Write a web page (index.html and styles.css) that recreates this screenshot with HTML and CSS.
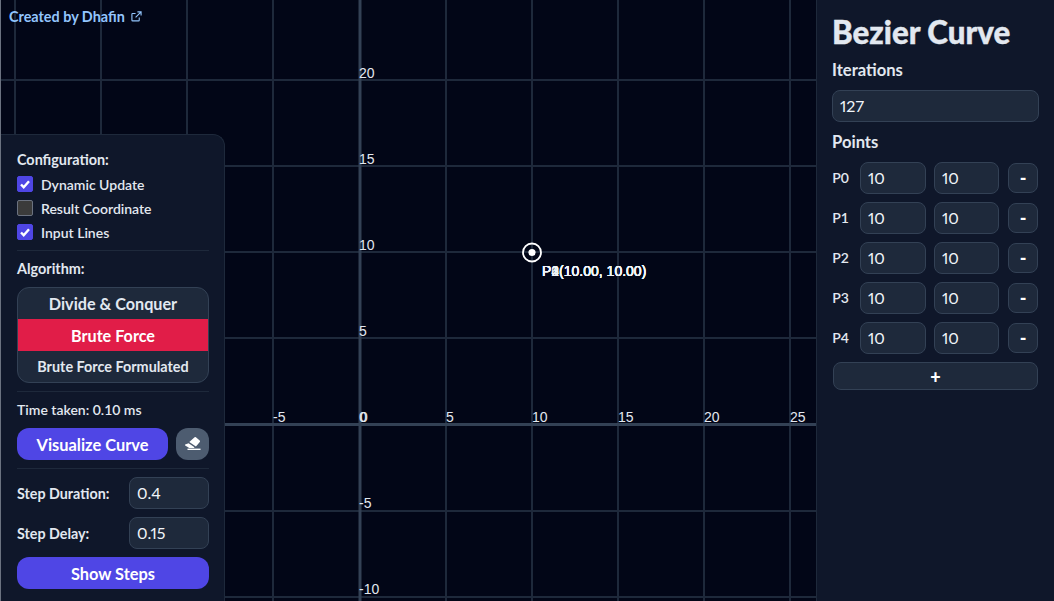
FILE: index.html
```html
<!DOCTYPE html>
<html lang="en">
<head>
    <meta charset="UTF-8">
    <title>Bezier Curve</title>
    <link rel="stylesheet" href="styles.css">
</head>
<body>
    <div class="app">
        <div class="canvas">
            <svg class="graph" width="816" height="601" viewBox="0 0 816 601">
                <g class="grid">
                    <line x1="15" y1="0" x2="15" y2="601"/>
                    <line x1="101" y1="0" x2="101" y2="601"/>
                    <line x1="187" y1="0" x2="187" y2="601"/>
                    <line x1="273" y1="0" x2="273" y2="601"/>
                    <line x1="446" y1="0" x2="446" y2="601"/>
                    <line x1="532" y1="0" x2="532" y2="601"/>
                    <line x1="618" y1="0" x2="618" y2="601"/>
                    <line x1="704" y1="0" x2="704" y2="601"/>
                    <line x1="790" y1="0" x2="790" y2="601"/>
                    <line x1="0" y1="80" x2="816" y2="80"/>
                    <line x1="0" y1="166" x2="816" y2="166"/>
                    <line x1="0" y1="252" x2="816" y2="252"/>
                    <line x1="0" y1="338" x2="816" y2="338"/>
                    <line x1="0" y1="511" x2="816" y2="511"/>
                    <line x1="0" y1="597" x2="816" y2="597"/>
                </g>
                <g class="axes">
                    <line x1="360" y1="0" x2="360" y2="601"/>
                    <line x1="0" y1="424.5" x2="816" y2="424.5"/>
                </g>
                <g class="ticks">
                    <text x="359" y="78">20</text>
                    <text x="359" y="164">15</text>
                    <text x="359" y="250">10</text>
                    <text x="359" y="336">5</text>
                    <text x="359" y="422">0</text>
                    <text x="360" y="422">0</text>
                    <text x="359" y="508">-5</text>
                    <text x="359" y="594">-10</text>
                    <text x="273" y="422">-5</text>
                    <text x="446" y="422">5</text>
                    <text x="532" y="422">10</text>
                    <text x="618" y="422">15</text>
                    <text x="704" y="422">20</text>
                    <text x="790" y="422">25</text>
                </g>
                <circle class="ring" cx="532" cy="252.5" r="9"/>
                <circle class="dot" cx="532" cy="252.5" r="3.6"/>
                <g class="point-label">
                    <text x="542" y="276">P0(10.00, 10.00)</text>
                    <text x="542" y="276">P1(10.00, 10.00)</text>
                    <text x="542" y="276">P2(10.00, 10.00)</text>
                    <text x="542" y="276">P3(10.00, 10.00)</text>
                    <text x="542" y="276">P4(10.00, 10.00)</text>
                </g>
            </svg>

            <a class="credit" href="#">Created by Dhafin
                <svg width="11" height="11" viewBox="0 0 24 24" fill="none" stroke="currentColor" stroke-width="2.4">
                    <path d="M18 14v6a1.5 1.5 0 0 1-1.5 1.5h-13A1.5 1.5 0 0 1 2 20V7a1.5 1.5 0 0 1 1.5-1.5H10"/>
                    <path d="M14 2h8v8M22 2 10 14"/>
                </svg>
            </a>

            <div class="panel">
                <section class="group first">
                    <h3>Configuration:</h3>
                    <label class="check"><span class="box on"><svg width="12" height="12" viewBox="0 0 12 12"><path d="M2 6.5l2.7 2.7L10 3.2"/></svg></span>Dynamic Update</label>
                    <label class="check"><span class="box"></span>Result Coordinate</label>
                    <label class="check"><span class="box on"><svg width="12" height="12" viewBox="0 0 12 12"><path d="M2 6.5l2.7 2.7L10 3.2"/></svg></span>Input Lines</label>
                </section>
                <section class="group">
                    <h3>Algorithm:</h3>
                    <div class="algos">
                        <div class="algo big">Divide &amp; Conquer</div>
                        <div class="algo big active">Brute Force</div>
                        <div class="algo">Brute Force Formulated</div>
                    </div>
                </section>
                <section class="group">
                    <p class="time">Time taken: 0.10 ms</p>
                    <div class="actions">
                        <button class="primary grow">Visualize Curve</button>
                        <button class="eraser">
                            <svg width="20" height="20" viewBox="0 0 20 20" fill="#fff">
                                <path d="M11.6 3.2a1 1 0 0 1 1.3 0l3.8 3.3a1 1 0 0 1 .1 1.4l-3.9 4.6-6.6-4.6z"/>
                                <path d="M5.6 9.2l5.9 4.1-.6.7H6.2l-4-2.6a.6.6 0 0 1 0-.9z"/>
                                <rect x="4.5" y="14.6" width="13" height="1.4"/>
                            </svg>
                        </button>
                    </div>
                </section>
                <section class="group last">
                    <div class="step"><span>Step Duration:</span><div class="field small">0.4</div></div>
                    <div class="step"><span>Step Delay:</span><div class="field small">0.15</div></div>
                    <button class="primary wide">Show Steps</button>
                </section>
            </div>
        </div>

        <aside class="sidebar">
            <h1>Bezier Curve</h1>
            <h2>Iterations</h2>
            <div class="field">127</div>
            <h2 class="points-title">Points</h2>
            <div class="point"><span class="name">P0</span><div class="field">10</div><div class="field">10</div><button class="minus">-</button></div>
            <div class="point"><span class="name">P1</span><div class="field">10</div><div class="field">10</div><button class="minus">-</button></div>
            <div class="point"><span class="name">P2</span><div class="field">10</div><div class="field">10</div><button class="minus">-</button></div>
            <div class="point"><span class="name">P3</span><div class="field">10</div><div class="field">10</div><button class="minus">-</button></div>
            <div class="point"><span class="name">P4</span><div class="field">10</div><div class="field">10</div><button class="minus">-</button></div>
            <button class="add">+</button>
        </aside>
    </div>
</body>
</html>
```

FILE: styles.css
```css
*{
    margin: 0;
    padding: 0;
    box-sizing: border-box;
}
body{
    background: #020617;
    color: #e2e8f0;
    font-family: "Lato", "Liberation Sans", sans-serif;
    overflow: hidden;
}
button{
    font-family: inherit;
    color: #fff;
    border: none;
}
.app{
    display: flex;
    width: 1054px;
    height: 601px;
}
.canvas{
    position: relative;
    width: 816px;
    height: 601px;
    overflow: hidden;
    background: #020617;
    border-left: 1px solid #6b7280;
}
.graph{
    display: block;
    margin-left: -1px;
}
.grid line{
    stroke: #1e293b;
    stroke-width: 2;
}
.axes line{
    stroke: #334155;
    stroke-width: 3;
}
.ticks text{
    font-family: "Liberation Sans", sans-serif;
    font-size: 14px;
    fill: #e2e8f0;
}
.ring{
    fill: none;
    stroke: #fff;
    stroke-width: 1.8;
}
.dot{
    fill: #fff;
}
.point-label text{
    font-family: "Liberation Sans", sans-serif;
    font-size: 14px;
    fill: #f1f5f9;
}
.credit{
    position: absolute;
    top: 8px;
    left: 8px;
    font-size: 14.4px;
    font-weight: 700;
    color: #93c5fd;
    text-decoration: none;
    display: flex;
    align-items: center;
    gap: 6px;
}
.panel{
    position: absolute;
    left: 0;
    top: 134px;
    width: 224px;
    height: 480px;
    padding: 15px 15px 15px 16px;
    background: #0f172a;
    border-top: 1px solid #1e293b;
    border-right: 1px solid #1e293b;
    border-radius: 0 12px 0 0;
}
.group{
    padding-bottom: 8px;
    margin-bottom: 8px;
    border-bottom: 1px solid #1e293b;
}
.group.first{
    padding-bottom: 6px;
}
.group.last{
    border-bottom: none;
}
.group h3{
    font-size: 14.4px;
    font-weight: 700;
    line-height: 20px;
    margin-bottom: 2px;
}
.check{
    display: flex;
    align-items: center;
    gap: 8px;
    height: 24px;
    font-size: 14px;
    font-weight: 600;
}
.box{
    width: 16px;
    height: 16px;
    border-radius: 2px;
    background: #3b3b3b;
    border: 1px solid #6b7280;
    display: flex;
    align-items: center;
    justify-content: center;
}
.box.on{
    background: #4f46e5;
    border-color: #4f46e5;
}
.box path{
    fill: none;
    stroke: #fff;
    stroke-width: 2.4;
}
.algos{
    margin-top: 8px;
    height: 96px;
    border: 1px solid #334155;
    border-radius: 12px;
    overflow: hidden;
    background: #1e293b;
}
.algo{
    height: 31px;
    display: flex;
    align-items: center;
    justify-content: center;
    font-size: 14.4px;
    font-weight: 700;
}
.algo.big{
    font-size: 16.2px;
}
.algo.active{
    height: 32px;
    background: #e11d48;
    color: #fff;
}
.time{
    font-size: 14px;
    font-weight: 600;
    line-height: 20px;
    margin-bottom: 8px;
}
.actions{
    display: flex;
    gap: 8px;
}
.primary{
    height: 32px;
    background: #4f46e5;
    border-radius: 12px;
    font-size: 16.4px;
    font-weight: 700;
}
.grow{
    flex: 1;
}
.wide{
    width: 100%;
}
.eraser{
    width: 33px;
    height: 32px;
    background: #4d5c70;
    border-radius: 12px;
    display: flex;
    align-items: center;
    justify-content: center;
}
.step{
    display: flex;
    align-items: center;
    justify-content: space-between;
    margin-bottom: 8px;
    font-size: 14.3px;
    font-weight: 700;
}
.field{
    height: 32px;
    background: #1e293b;
    border: 1px solid #334155;
    border-radius: 8px;
    padding: 0 7px 2px;
    display: flex;
    align-items: center;
    font-size: 16px;
    font-weight: 400;
    font-variant-numeric: proportional-nums;
    color: #f1f5f9;
}
.field.small{
    width: 80px;
}
.sidebar{
    width: 238px;
    height: 601px;
    padding: 15px;
    background: #0f172a;
    border-left: 1px solid #1e293b;
}
.sidebar h1{
    font-size: 31.3px;
    font-weight: 900;
    line-height: 34px;
    margin-bottom: 9px;
    -webkit-text-stroke: 0.4px #e2e8f0;
}
.sidebar h2{
    font-size: 16.6px;
    font-weight: 700;
    line-height: 24px;
    margin-bottom: 8px;
}
.points-title{
    margin-top: 8px;
}
.point{
    display: flex;
    align-items: center;
    gap: 8px;
    margin-bottom: 8px;
}
.name{
    width: 20px;
    padding: 0 3px 2px 0;
    font-size: 14px;
    font-weight: 600;
    text-align: center;
}
.point .field{
    width: 66px;
}
.point .field + .field{
    width: 65px;
}
.minus{
    width: 30px;
    height: 30px;
    margin-left: 1px;
    background: #1e293b;
    border: 1px solid #334155;
    border-radius: 8px;
    font-size: 18px;
    font-weight: 900;
}
.add{
    display: block;
    width: 205px;
    height: 28px;
    margin: 1px 0 0 1px;
    padding-top: 2px;
    background: #1e293b;
    border: 1px solid #334155;
    border-radius: 8px;
    font-size: 18px;
    font-weight: 900;
}
```
